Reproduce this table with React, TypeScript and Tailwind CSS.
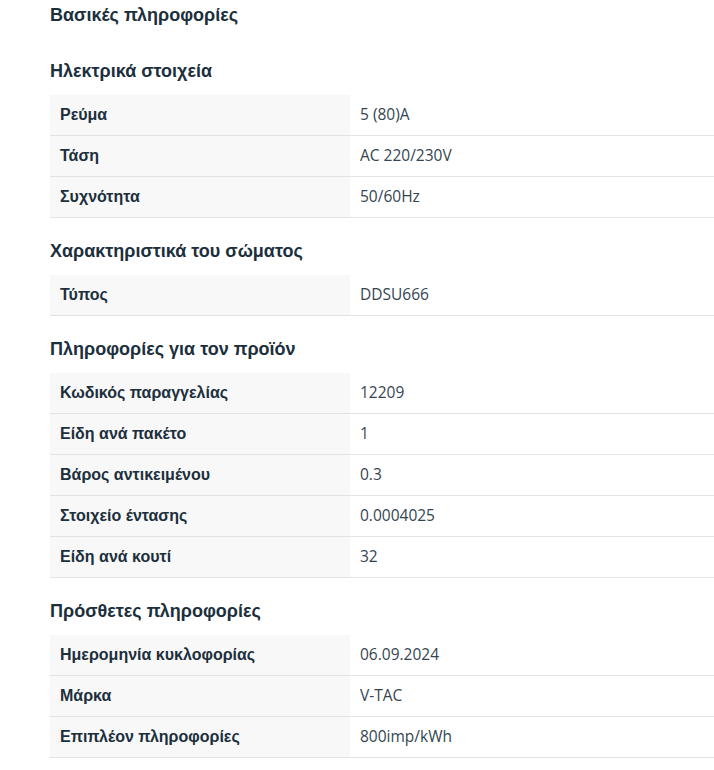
const sections: { title: string; rows: [string, string][] }[] = [
  {
    title: "Ηλεκτρικά στοιχεία",
    rows: [
      ["Ρεύμα", "5 (80)A"],
      ["Τάση", "AC 220/230V"],
      ["Συχνότητα", "50/60Hz"],
    ],
  },
  {
    title: "Χαρακτηριστικά του σώματος",
    rows: [["Τύπος", "DDSU666"]],
  },
  {
    title: "Πληροφορίες για τον προϊόν",
    rows: [
      ["Κωδικός παραγγελίας", "12209"],
      ["Είδη ανά πακέτο", "1"],
      ["Βάρος αντικειμένου", "0.3"],
      ["Στοιχείο έντασης", "0.0004025"],
      ["Είδη ανά κουτί", "32"],
    ],
  },
  {
    title: "Πρόσθετες πληροφορίες",
    rows: [
      ["Ημερομηνία κυκλοφορίας", "06.09.2024"],
      ["Μάρκα", "V-TAC"],
      ["Επιπλέον πληροφορίες", "800imp/kWh"],
    ],
  },
];

export default function App() {
  return (
    <div className="min-h-[770px] bg-white pl-[50px] text-[#1c2f3c] font-['Liberation_Sans',Arial,sans-serif]">
      <h2 className="pt-[4px] text-[18px] font-bold leading-[22px]">Βασικές πληροφορίες</h2>
      {sections.map((s, i) => (
        <div key={i} className={i === 0 ? "mt-[34px]" : "mt-[22px]"}>
          <h3 className="text-[18px] font-bold leading-[22px]">{s.title}</h3>
          <div className="mt-[13px]">
            {s.rows.map(([label, value]) => (
              <div key={label} className="flex h-[41px] border-b border-[#e3e3e3]">
                <div className="w-[300px] shrink-0 bg-[#f8f8f8] pl-[10px] flex items-center text-[16px] font-bold">
                  {label}
                </div>
                <div className="flex-1 pl-[10px] flex items-center text-[15.5px] text-[#35454f] font-['Open_Sans',sans-serif]">
                  {value}
                </div>
              </div>
            ))}
          </div>
        </div>
      ))}
    </div>
  );
}
